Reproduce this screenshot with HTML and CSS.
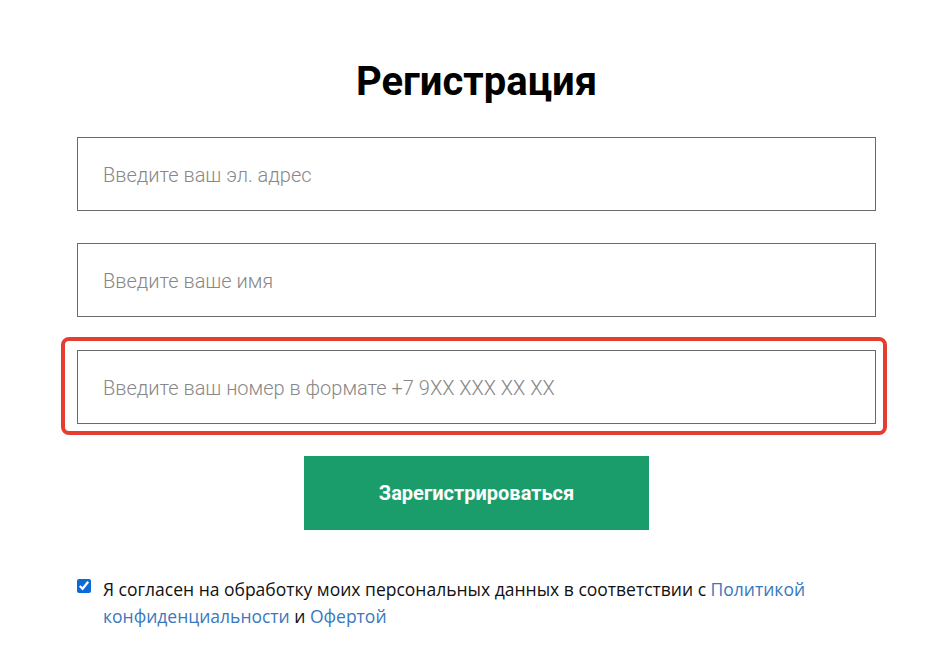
FILE: index.html
```html
<!DOCTYPE html>
<html lang="ru">
<head>
<meta charset="utf-8">
<link rel="stylesheet" href="styles.css">
</head>
<body>
<div class="page">
  <form class="form">
    <h1 class="title">Регистрация</h1>
    <div class="field"><input class="input" type="text" placeholder="Введите ваш эл. адрес"></div>
    <div class="field"><input class="input" type="text" placeholder="Введите ваше имя"></div>
    <div class="field field--highlight"><input class="input" type="text" placeholder="Введите ваш номер в формате +7 9XX XXX XX XX"></div>
    <div class="actions"><button class="btn" type="button">Зарегистрироваться</button></div>
    <label class="consent">
      <input class="consent__box" type="checkbox" checked>
      <span class="consent__text">Я согласен на обработку моих персональных данных в соответствии с <a class="link" href="#">Политикой конфиденциальности</a> и <a class="link" href="#">Офертой</a></span>
    </label>
  </form>
</div>
</body>
</html>
```
FILE: styles.css
```css
html, body {
  margin: 0;
  padding: 0;
  background: #fff;
}
.page {
  padding: 0 60px 0 77px;
}
.form {
  width: 799px;
  display: flex;
  flex-direction: column;
}
.title {
  margin: 56px 0 0;
  height: 54px;
  text-align: center;
  font-family: Roboto, "Liberation Sans", sans-serif;
  font-weight: 700;
  font-size: 40px;
  line-height: 52px;
  color: #000;
}
.field {
  position: relative;
  margin-top: 27px;
}
.field + .field {
  margin-top: 32px;
}
.field--highlight {
  margin-top: 33px !important;
}
.field--highlight::after {
  content: "";
  position: absolute;
  left: -16px;
  right: -11px;
  top: -13px;
  bottom: -11px;
  border: 4px solid #e53d30;
  border-radius: 8px;
  pointer-events: none;
}
.input {
  display: block;
  box-sizing: border-box;
  width: 100%;
  height: 74px;
  margin: 0;
  padding: 2px 25px 0;
  border: 1px solid #6a6a6a;
  border-radius: 0;
  background: #fff;
  font-family: Roboto, "Liberation Sans", sans-serif;
  font-size: 20px;
  font-weight: 300;
  color: #333;
  outline: none;
}
.input::placeholder {
  color: #888;
  opacity: 1;
}
.actions {
  display: flex;
  justify-content: center;
  margin-top: 32px;
}
.btn {
  width: 345px;
  height: 74px;
  border: 0;
  background: #1a9d6a;
  color: #fff;
  font-family: Roboto, "Liberation Sans", sans-serif;
  font-weight: 700;
  font-size: 20px;
  cursor: pointer;
}
.consent {
  display: flex;
  align-items: flex-start;
  gap: 12px;
  margin-top: 46px;
  font-family: "Open Sans", "Noto Sans", sans-serif;
  font-size: 17.5px;
  line-height: 27px;
  color: #111;
}
.consent__box {
  flex: none;
  width: 14px;
  height: 14px;
  margin: 3px 0 0 0;
  accent-color: #0b6bd6;
}
.link {
  color: #3a78be;
  text-decoration: none;
}
```
